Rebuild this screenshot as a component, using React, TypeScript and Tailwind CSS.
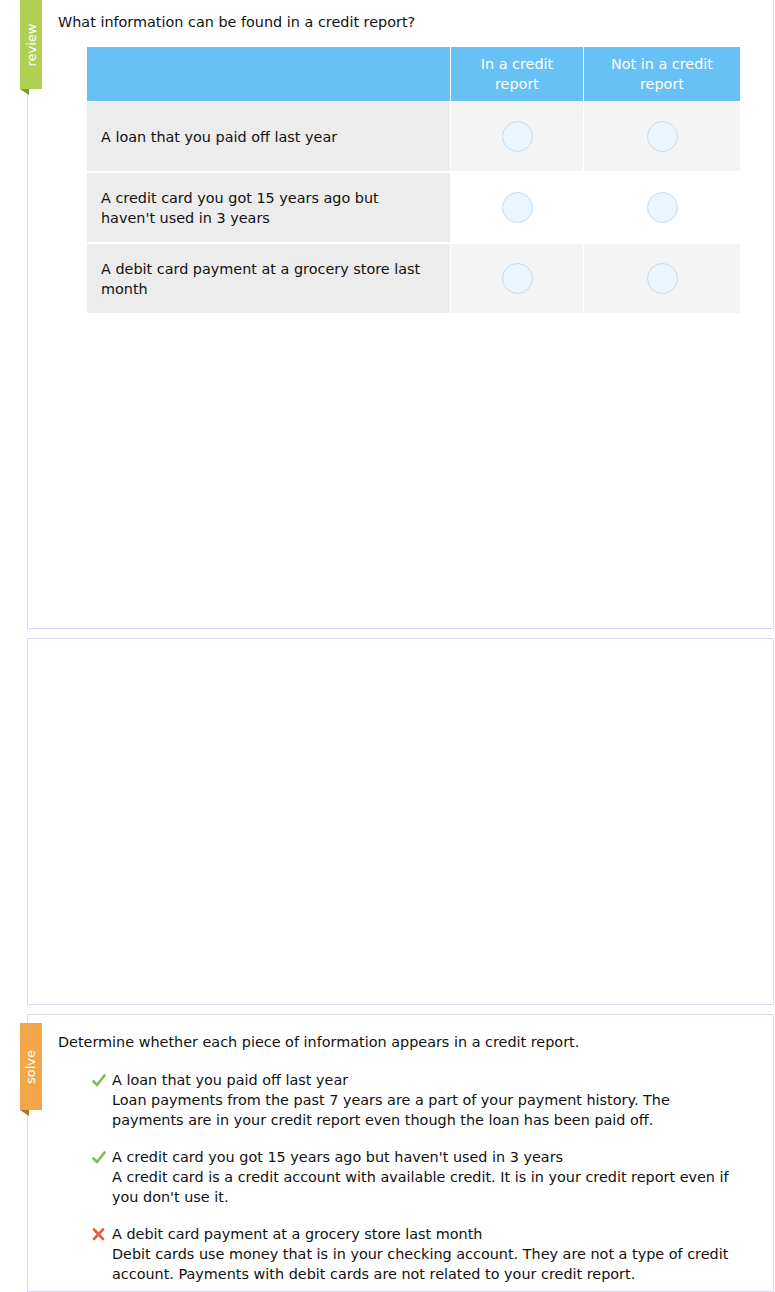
import React from "react";

const rows = [
  { label: "A loan that you paid off last year", shade: true },
  { label: "A credit card you got 15 years ago but haven't used in 3 years", shade: false },
  { label: "A debit card payment at a grocery store last month", shade: true },
];

const answers = [
  {
    ok: true,
    title: "A loan that you paid off last year",
    text: "Loan payments from the past 7 years are a part of your payment history. The payments are in your credit report even though the loan has been paid off.",
  },
  {
    ok: true,
    title: "A credit card you got 15 years ago but haven't used in 3 years",
    text: "A credit card is a credit account with available credit. It is in your credit report even if you don't use it.",
  },
  {
    ok: false,
    title: "A debit card payment at a grocery store last month",
    text: "Debit cards use money that is in your checking account. They are not a type of credit account. Payments with debit cards are not related to your credit report.",
  },
];

function SideTab({ label, color, fold, height }: { label: string; color: string; fold: string; height: string }) {
  return (
    <div className="absolute left-[-8px] flex flex-col">
      <div className={`w-[22px] ${height} ${color} flex items-center justify-center`}>
        <span className="-rotate-90 whitespace-nowrap text-[13px] text-white">{label}</span>
      </div>
      <svg width="9" height="6" viewBox="0 0 9 6" className="block">
        <polygon points="0,0 9,0 9,6" fill={fold} />
      </svg>
    </div>
  );
}

function Radio() {
  return <span className="block h-[31px] w-[31px] rounded-full border border-[#c4dcef] bg-[#eaf5fd]" />;
}

function Check() {
  return (
    <svg width="14" height="13" viewBox="0 0 14 13" className="mt-[4px] shrink-0">
      <path d="M1.5 7.5 L5 11 L12.5 1.5" fill="none" stroke="#7cbf4e" strokeWidth="2.6" strokeLinecap="round" strokeLinejoin="round" />
    </svg>
  );
}

function Cross() {
  return (
    <svg width="14" height="13" viewBox="0 0 14 13" className="mt-[4px] shrink-0">
      <path d="M2 1.5 L11 11 M11 1.5 L2 11" fill="none" stroke="#e0603f" strokeWidth="2.6" strokeLinecap="round" />
    </svg>
  );
}

export default function App() {
  return (
    <div
      className="min-h-[1292px] w-[775px] bg-white text-[14.4px] leading-[20px] text-[#111]"
      style={{ fontFamily: '"DejaVu Sans", Verdana, sans-serif' }}
    >
      <div className="flex flex-col gap-[9px]">
        {/* review panel */}
        <div className="relative ml-[27px] h-[629px] w-[747px] border-x border-b border-[#dcd8f3]">
          <SideTab label="review" color="bg-[#b2cf55]" fold="#7f9a33" height="h-[89px]" />
          <div className="pl-[30px] pt-[12px]">What information can be found in a credit report?</div>

          <div className="ml-[59px] mt-[15px] w-[653px]">
            <div className="flex h-[54px] gap-px bg-white">
              <div className="w-[363px] bg-[#67c1f5]" />
              <div className="flex w-[132px] items-center justify-center bg-[#67c1f5] text-center text-white">
                In a credit
                <br />
                report
              </div>
              <div className="flex flex-1 items-center justify-center bg-[#67c1f5] text-center text-white">
                Not in a credit
                <br />
                report
              </div>
            </div>
            <div className="flex flex-col gap-[2px] pt-px">
              {rows.map((r) => (
                <div key={r.label} className="flex h-[69px] gap-px">
                  <div className="flex w-[363px] items-center bg-[#ececec] pl-[14px] pr-[20px]">{r.label}</div>
                  <div className={`flex w-[132px] items-center justify-center ${r.shade ? "bg-[#f4f4f4]" : "bg-white"}`}>
                    <Radio />
                  </div>
                  <div className={`flex flex-1 items-center justify-center ${r.shade ? "bg-[#f4f4f4]" : "bg-white"}`}>
                    <Radio />
                  </div>
                </div>
              ))}
            </div>
          </div>
        </div>

        {/* empty work panel */}
        <div className="ml-[27px] h-[367px] w-[747px] border border-[#dcd8f3]" />

        {/* solve panel */}
        <div className="relative ml-[27px] h-[278px] w-[747px] border border-[#dcd8f3]">
          <div className="absolute top-[8px] left-0">
            <SideTab label="solve" color="bg-[#f2a649]" fold="#b9701f" height="h-[87px]" />
          </div>
          <div className="pl-[30px] pt-[17px]">Determine whether each piece of information appears in a credit report.</div>
          <div className="mt-[18px] flex flex-col gap-[17px] pl-[64px] pr-[34px]">
            {answers.map((a) => (
              <div key={a.title} className="flex gap-[6px]">
                {a.ok ? <Check /> : <Cross />}
                <div>
                  <div>{a.title}</div>
                  <div>{a.text}</div>
                </div>
              </div>
            ))}
          </div>
        </div>
      </div>
    </div>
  );
}
